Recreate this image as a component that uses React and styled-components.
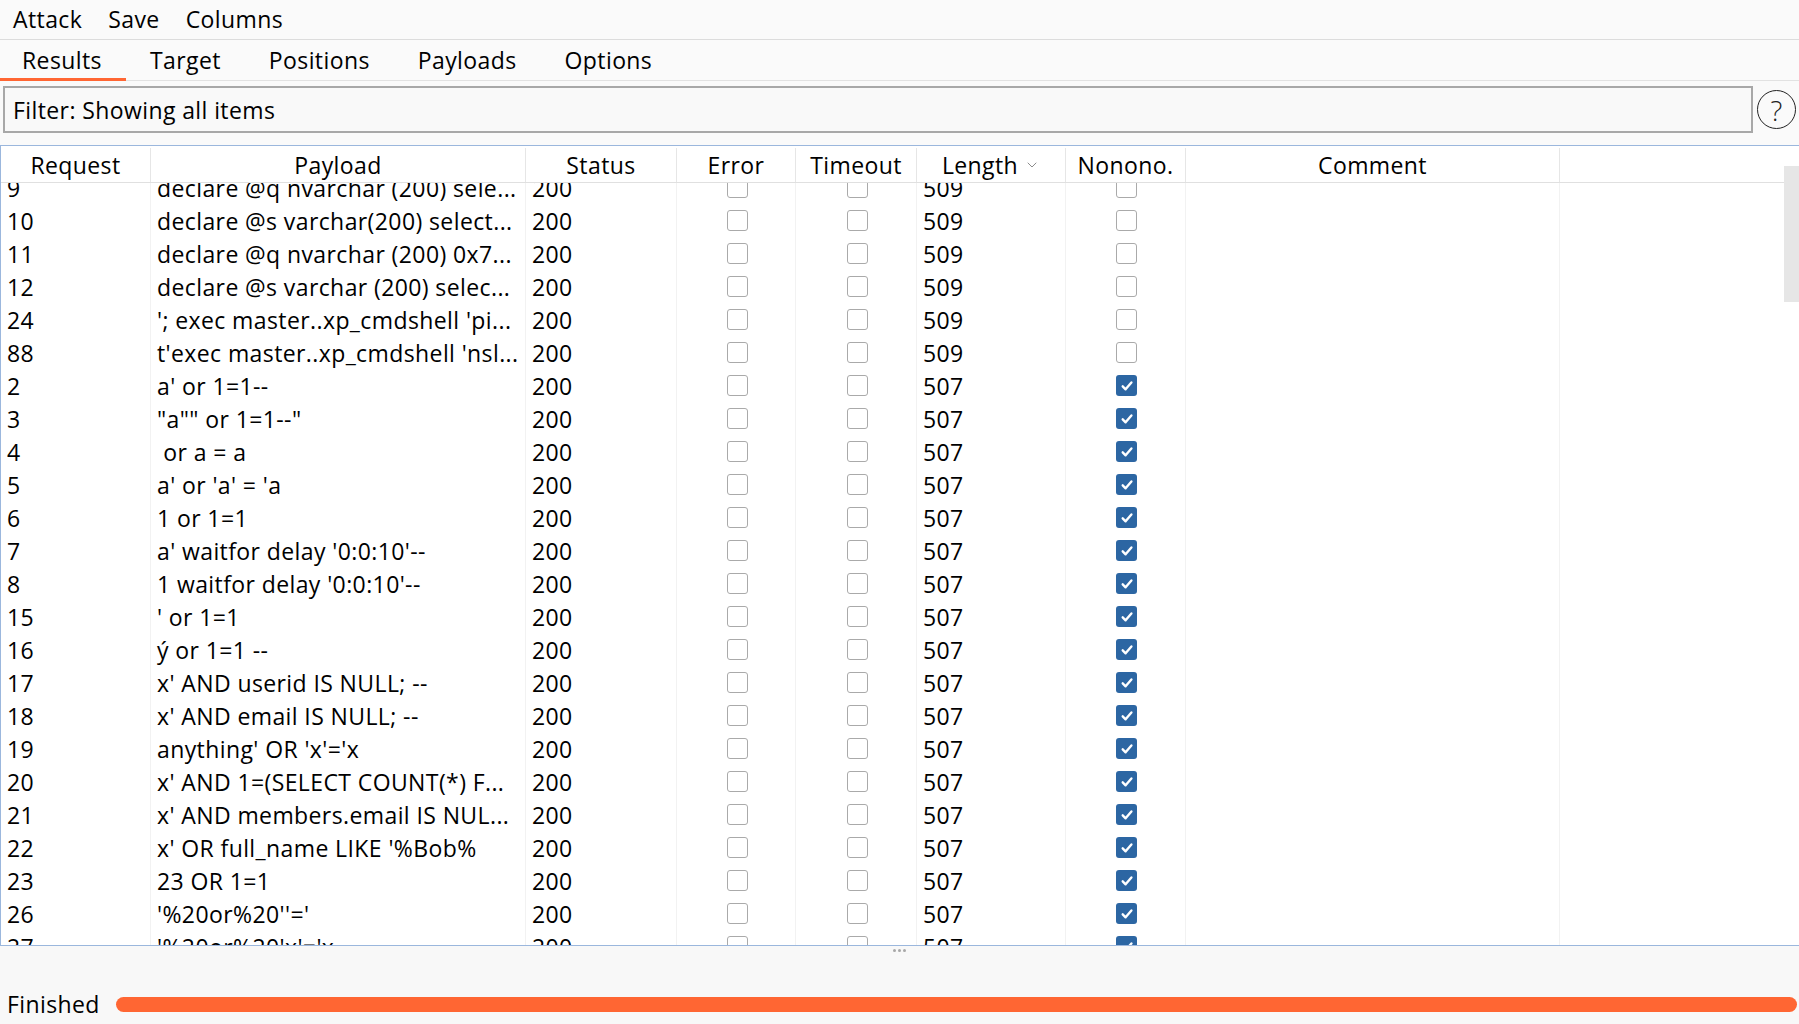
import React from "react";
import styled, { createGlobalStyle } from "styled-components";
import { ChevronDown } from "lucide-react";

const GlobalStyle = createGlobalStyle`
  html, body {
    margin: 0;
    padding: 0;
    height: 100%;
  }
  body {
    font-family: "Open Sans", "Noto Sans", sans-serif;
    color: #000;
    background: #fff;
    overflow: hidden;
  }
  #root {
    height: 100%;
  }
`;

const Window = styled.div`
  display: flex;
  flex-direction: column;
  height: 100vh;
  font-size: 23px;
  letter-spacing: 0.4px;
`;

const MenuBar = styled.div`
  display: flex;
  align-items: center;
  height: 39px;
  border-bottom: 1px solid #dcdcdc;
  background: #fafafa;
`;

const MenuItem = styled.div`
  padding: 0 13px;
  line-height: 39px;
`;

const TabBar = styled.div`
  display: flex;
  height: 40px;
  border-bottom: 1px solid #e2e2e2;
  background: #fafafa;
`;

const Tab = styled.div`
  display: flex;
  align-items: center;
  padding: 0 24px 0 ${(p) => (p.first ? "22px" : "24px")};
  border-bottom: 3px solid ${(p) => (p.active ? "#ff6633" : "transparent")};
  margin-bottom: -1px;
  padding-top: 2px;
`;

const FilterRow = styled.div`
  display: flex;
  align-items: flex-start;
  gap: 4px;
  height: 64px;
  padding: 5px 3px 0 3px;
  box-sizing: border-box;
  background: #fafafa;
`;

const FilterBox = styled.div`
  flex: 1;
  height: 47px;
  box-sizing: border-box;
  border: 2px solid #a8a8a8;
  background: #f9f9f9;
  display: flex;
  align-items: center;
  padding-left: 8px;
`;

const HelpIcon = styled.div`
  width: 39px;
  height: 39px;
  margin-top: 4px;
  box-sizing: border-box;
  border: 1.5px solid #222;
  border-radius: 50%;
  display: flex;
  align-items: center;
  justify-content: center;
  font-size: 28px;
  font-weight: 300;
  color: #222;
`;

const TableFrame = styled.div`
  flex: 1;
  display: flex;
  min-height: 0;
  border-top: 1px solid #9bb7dd;
  border-left: 1px solid #9bb7dd;
  border-bottom: 1px solid #9bb7dd;
  background: #fff;
`;

const TableArea = styled.div`
  flex: 1;
  display: flex;
  flex-direction: column;
  min-width: 0;
`;

const COLUMNS = "150px 375px 151px 119px 121px 149px 120px 374px 1fr";

const HeaderRow = styled.div`
  display: grid;
  grid-template-columns: ${COLUMNS};
  height: 36px;
  border-bottom: 1px solid #e0e0e0;
  position: relative;
  z-index: 1;
  background: #fff;
`;

const HeaderCell = styled.div`
  display: flex;
  align-items: center;
  justify-content: center;
  gap: 6px;
  border-right: ${(p) => (p.last ? "none" : "1px solid #e6e6e6")};
  margin-top: 2px;
`;

const Body = styled.div`
  flex: 1;
  overflow: hidden;
`;

const Rows = styled.div`
  margin-top: -12px;
`;

const Row = styled.div`
  display: grid;
  grid-template-columns: ${COLUMNS};
  height: 33px;
`;

const Cell = styled.div`
  display: flex;
  align-items: center;
  justify-content: ${(p) => (p.center ? "center" : "flex-start")};
  padding-left: ${(p) => (p.center ? "2px" : "6px")};
  border-right: ${(p) => (p.last ? "none" : "1px solid #f2f2f2")};
  white-space: pre;
  overflow: hidden;
`;

const Check = styled.div`
  width: 21px;
  height: 21px;
  box-sizing: border-box;
  border-radius: 3px;
  border: ${(p) => (p.checked ? "none" : "1.5px solid #aaaaaa")};
  background: ${(p) => (p.checked ? "#2c66a3" : "#fff")};
  display: flex;
  align-items: center;
  justify-content: center;
`;

const ScrollTrack = styled.div`
  width: 15px;
  padding-top: 20px;
  background: #fff;
`;

const ScrollThumb = styled.div`
  height: 136px;
  background: #e6e6e6;
`;

const Footer = styled.div`
  height: 78px;
  background: #f8f8f8;
  display: flex;
  flex-direction: column;
`;

const Grip = styled.div`
  display: flex;
  justify-content: center;
  gap: 2px;
  padding-top: 3px;
  height: 6px;
`;

const GripDot = styled.span`
  width: 3px;
  height: 3px;
  border-radius: 50%;
  background: #a8a8a8;
`;

const StatusRow = styled.div`
  margin-top: auto;
  display: flex;
  align-items: center;
  gap: 16px;
  padding: 0 2px 5px 7px;
  height: 30px;
`;

const ProgressBar = styled.div`
  flex: 1;
  height: 15px;
  border-radius: 8px;
  background: #ff6633;
`;

const rows = [
  ["9", "declare @q nvarchar (200) sele...", "509", false],
  ["10", "declare @s varchar(200) select...", "509", false],
  ["11", "declare @q nvarchar (200) 0x7...", "509", false],
  ["12", "declare @s varchar (200) selec...", "509", false],
  ["24", "'; exec master..xp_cmdshell 'pi...", "509", false],
  ["88", "t'exec master..xp_cmdshell 'nsl...", "509", false],
  ["2", "a' or 1=1--", "507", true],
  ["3", '"a"" or 1=1--"', "507", true],
  ["4", " or a = a", "507", true],
  ["5", "a' or 'a' = 'a", "507", true],
  ["6", "1 or 1=1", "507", true],
  ["7", "a' waitfor delay '0:0:10'--", "507", true],
  ["8", "1 waitfor delay '0:0:10'--", "507", true],
  ["15", "' or 1=1", "507", true],
  ["16", "ý or 1=1 --", "507", true],
  ["17", "x' AND userid IS NULL; --", "507", true],
  ["18", "x' AND email IS NULL; --", "507", true],
  ["19", "anything' OR 'x'='x", "507", true],
  ["20", "x' AND 1=(SELECT COUNT(*) F...", "507", true],
  ["21", "x' AND members.email IS NUL...", "507", true],
  ["22", "x' OR full_name LIKE '%Bob%", "507", true],
  ["23", "23 OR 1=1", "507", true],
  ["26", "'%20or%20''='", "507", true],
  ["27", "'%20or%20'x'='x", "507", true],
];

const CheckMark = () => (
  <svg width="14" height="14" viewBox="0 0 13 13">
    <path
      d="M2.5 6.8 L5.2 9.6 L10.6 3.2"
      fill="none"
      stroke="#fff"
      strokeWidth="2.2"
      strokeLinecap="round"
      strokeLinejoin="round"
    />
  </svg>
);

const Box = ({ checked }) => (
  <Check checked={checked}>{checked && <CheckMark />}</Check>
);

export default function App() {
  return (
    <>
      <GlobalStyle />
      <Window>
        <MenuBar>
          <MenuItem>Attack</MenuItem>
          <MenuItem>Save</MenuItem>
          <MenuItem>Columns</MenuItem>
        </MenuBar>
        <TabBar>
          <Tab first active>
            Results
          </Tab>
          <Tab>Target</Tab>
          <Tab>Positions</Tab>
          <Tab>Payloads</Tab>
          <Tab>Options</Tab>
        </TabBar>
        <FilterRow>
          <FilterBox>Filter: Showing all items</FilterBox>
          <HelpIcon>?</HelpIcon>
        </FilterRow>
        <TableFrame>
          <TableArea>
            <HeaderRow>
              <HeaderCell>Request</HeaderCell>
              <HeaderCell>Payload</HeaderCell>
              <HeaderCell>Status</HeaderCell>
              <HeaderCell>Error</HeaderCell>
              <HeaderCell>Timeout</HeaderCell>
              <HeaderCell>
                Length
                <ChevronDown size={16} color="#8c8c8c" strokeWidth={1.5} />
              </HeaderCell>
              <HeaderCell>Nonono.</HeaderCell>
              <HeaderCell>Comment</HeaderCell>
              <HeaderCell last />
            </HeaderRow>
            <Body>
              <Rows>
                {rows.map(([req, payload, len, hit]) => (
                  <Row key={req}>
                    <Cell>{req}</Cell>
                    <Cell>{payload}</Cell>
                    <Cell>200</Cell>
                    <Cell center>
                      <Box />
                    </Cell>
                    <Cell center>
                      <Box />
                    </Cell>
                    <Cell>{len}</Cell>
                    <Cell center>
                      <Box checked={hit} />
                    </Cell>
                    <Cell />
                    <Cell last />
                  </Row>
                ))}
              </Rows>
            </Body>
          </TableArea>
          <ScrollTrack>
            <ScrollThumb />
          </ScrollTrack>
        </TableFrame>
        <Footer>
          <Grip>
            <GripDot />
            <GripDot />
            <GripDot />
          </Grip>
          <StatusRow>
            Finished
            <ProgressBar />
          </StatusRow>
        </Footer>
      </Window>
    </>
  );
}
